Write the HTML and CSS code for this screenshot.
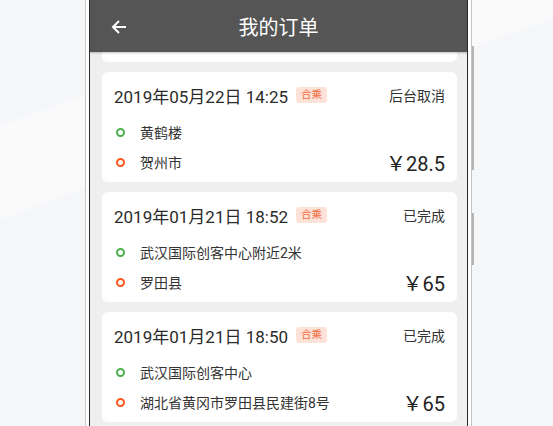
FILE: index.html
```html
<!DOCTYPE html>
<html>
  <head>
    <meta charset="utf-8">
    <title>我的订单</title>
    <link rel="stylesheet" href="styles.css">
  </head>
  <body>
    <div class="phone">
      <span class="side-btn btn-power"></span>
      <span class="side-btn btn-volume"></span>
      <div class="screen">
        <div class="topbar">
          <svg class="back" width="16" height="16" viewBox="0 0 16 16">
            <path d="M15 8H2M8 2L2 8l6 6" fill="none" stroke="#fff" stroke-width="2"/>
          </svg>
          <div class="title">我的订单</div>
        </div>
        <div class="orders">
          <div class="card-tail"></div>

          <div class="card">
            <div class="card-head">
              <span class="date">2019年05月22日 14:25</span>
              <span class="tag">合乘</span>
              <span class="status">后台取消</span>
            </div>
            <div class="stops">
              <div class="stop"><i class="dot start"></i><span class="place">黄鹤楼</span></div>
              <div class="stop"><i class="dot end"></i><span class="place">贺州市</span><span class="price">￥28.5</span></div>
            </div>
          </div>

          <div class="card">
            <div class="card-head">
              <span class="date">2019年01月21日 18:52</span>
              <span class="tag">合乘</span>
              <span class="status">已完成</span>
            </div>
            <div class="stops">
              <div class="stop"><i class="dot start"></i><span class="place">武汉国际创客中心附近2米</span></div>
              <div class="stop"><i class="dot end"></i><span class="place">罗田县</span><span class="price">￥65</span></div>
            </div>
          </div>

          <div class="card">
            <div class="card-head">
              <span class="date">2019年01月21日 18:50</span>
              <span class="tag">合乘</span>
              <span class="status">已完成</span>
            </div>
            <div class="stops">
              <div class="stop"><i class="dot start"></i><span class="place">武汉国际创客中心</span></div>
              <div class="stop"><i class="dot end"></i><span class="place">湖北省黄冈市罗田县民建街8号</span><span class="price">￥65</span></div>
            </div>
          </div>
        </div>
      </div>
    </div>
  </body>
</html>
```

FILE: styles.css
```css
body {
  margin: 0;
  padding: 0;
  height: 426px;
  overflow: hidden;
  font-family: Roboto, "Noto Sans CJK SC", sans-serif;
  background-color: #f5f6f8;
  background-image:
    linear-gradient(100deg, transparent 40%, rgba(255,255,255,0.5) 40%, rgba(255,255,255,0.5) 42%, transparent 42%),
    linear-gradient(160deg, transparent 20%, rgba(255,255,255,0.4) 20%, rgba(255,255,255,0.4) 35%, transparent 35%);
}
.phone {
  position: relative;
  margin-left: 85px;
  width: 379px;
  height: 426px;
  padding: 0 3px 0 3px;
  background: #fff;
  border-left: 1px solid #c9c9c9;
  border-right: 1px solid #c4c4c4;
}
.side-btn {
  position: absolute;
  right: -3px;
  width: 2px;
  background: #b5b5b5;
}
.btn-power {
  top: 46px;
  height: 124px;
}
.btn-volume {
  top: 213px;
  height: 52px;
}
.screen {
  width: 377px;
  height: 426px;
  border-left: 1px solid #2a2a2a;
  border-right: 1px solid #2a2a2a;
  background: #efefef;
  overflow: hidden;
}
.topbar {
  position: relative;
  height: 52px;
  background: #555555;
  display: flex;
  align-items: center;
  justify-content: center;
  box-shadow: 0 1px 2px rgba(0,0,0,0.25);
}
.back {
  position: absolute;
  left: 21px;
  top: 19px;
}
.title {
  color: #fff;
  font-size: 20px;
  margin-top: 1px;
}
.orders {
  padding: 0 10px 0 12px;
}
.card-tail {
  height: 10px;
  background: #fff;
  border-radius: 0 0 6px 6px;
  margin-bottom: 10px;
}
.card {
  background: #fff;
  border-radius: 6px;
  padding: 13px 12px 5px;
  margin-bottom: 10px;
}
.card-head {
  display: flex;
  align-items: center;
  height: 20px;
}
.date {
  font-size: 17px;
  color: #2b2b2b;
}
.tag {
  margin-left: 8px;
  padding: 0 5px;
  height: 16px;
  line-height: 16px;
  font-size: 10.5px;
  color: #f06a3c;
  background: #fde2d9;
  border-radius: 3px;
}
.status {
  margin-left: auto;
  font-size: 14px;
  color: #333;
}
.stops {
  margin-top: 12px;
}
.stop {
  display: flex;
  align-items: center;
  height: 30px;
}
.dot {
  width: 5px;
  height: 5px;
  border-radius: 50%;
  margin: 0 15px 0 2px;
  border: 2px solid #4caf50;
}
.dot.end {
  border-color: #ff5722;
}
.place {
  font-size: 14px;
  color: #333;
}
.price {
  margin-left: auto;
  font-size: 20px;
  color: #222;
}
```
